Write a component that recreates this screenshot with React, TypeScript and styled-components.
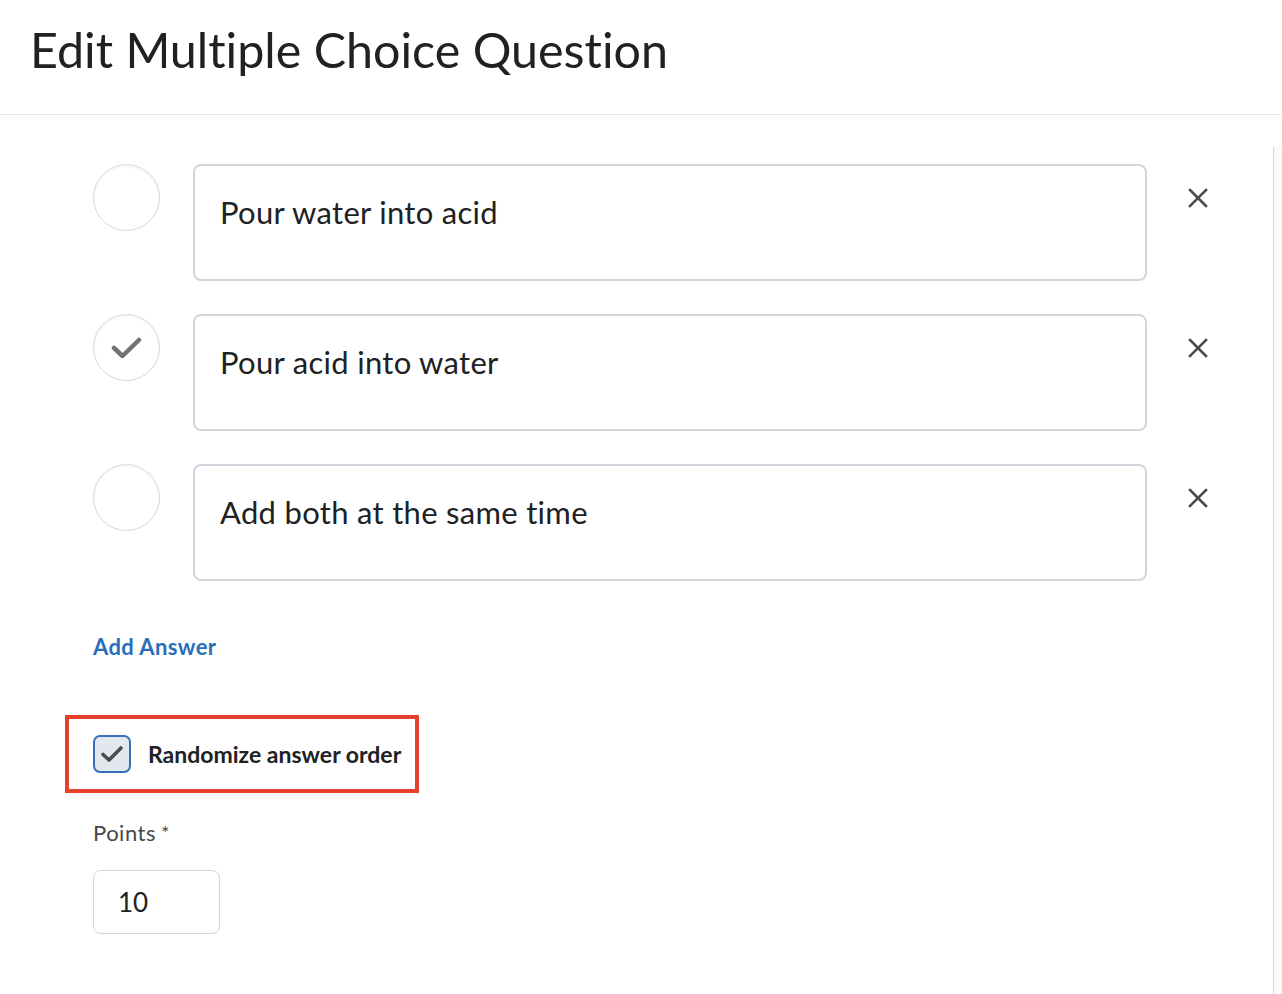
import React from "react";
import styled, { createGlobalStyle } from "styled-components";

const Global = createGlobalStyle`
  html, body { margin: 0; padding: 0; background: #ffffff; }
  body {
    font-family: Lato, "Open Sans", sans-serif;
    color: #202122;
    font-variant-ligatures: no-common-ligatures;
  }
  * { box-sizing: border-box; }
`;

const Page = styled.div`
  width: 1282px;
  height: 994px;
  overflow: hidden;
  display: flex;
  flex-direction: column;
`;

const Header = styled.header`
  height: 115px;
  flex: none;
  border-bottom: 1px solid #e3e9f1;
  padding: 19px 0 0 30px;
`;

const Title = styled.h1`
  margin: 0;
  font-size: 48.4px;
  line-height: 61px;
  font-weight: 400;
  color: #202122;
`;

const Body = styled.div`
  flex: 1;
  display: flex;
`;

const Main = styled.main`
  flex: 1;
  padding: 49px 0 0 93px;
  display: flex;
  flex-direction: column;
  align-items: flex-start;
`;

const ScrollTrack = styled.div`
  width: 9px;
  margin-top: 32px;
  border-left: 1px solid #d6d8da;
  background: #f8fafe;
`;

const AnswerList = styled.div`
  display: flex;
  flex-direction: column;
  gap: 33px;
`;

const AnswerRow = styled.div`
  display: flex;
  align-items: flex-start;
`;

const Radio = styled.div`
  width: 67px;
  height: 67px;
  border-radius: 50%;
  border: 1px solid #d3d9e1;
  box-shadow: inset 0 2px 2px rgba(0, 0, 0, 0.04);
  background: #fff;
  display: flex;
  align-items: center;
  justify-content: center;
  margin-right: 33px;
  flex: none;
`;

const AnswerBox = styled.div`
  width: 954px;
  height: 117px;
  border: 2px solid #cfd6dd;
  border-radius: 8px;
  padding: 28px 0 0 25px;
  font-size: 31px;
  line-height: 36px;
  letter-spacing: 0.3px;
  color: #202122;
`;

const RemoveButton = styled.button`
  border: none;
  background: none;
  padding: 0;
  margin: 24px 0 0 41px;
  width: 20px;
  height: 20px;
  display: flex;
  cursor: pointer;
`;

const AddAnswer = styled.a`
  margin-top: 53px;
  font-size: 22px;
  line-height: 26px;
  font-weight: 700;
  letter-spacing: 0.4px;
  color: #2a6ebb;
  text-decoration: none;
  cursor: pointer;
`;

const Highlight = styled.label`
  margin: 55px 0 0 -28px;
  display: inline-flex;
  align-items: center;
  gap: 17px;
  border: 4px solid #e5412c;
  padding: 16px 14px 16px 24px;
  cursor: pointer;
`;

const CheckBox = styled.span`
  width: 38px;
  height: 38px;
  border: 2px solid #3a70b9;
  border-radius: 7px;
  background: #e3e7ee;
  display: flex;
  align-items: center;
  justify-content: center;
  flex: none;
`;

const CheckLabel = styled.span`
  font-size: 23px;
  line-height: 26px;
  font-weight: 700;
  color: #202122;
`;

const FieldLabel = styled.div`
  margin-top: 27px;
  height: 26px;
  display: flex;
  align-items: flex-start;
  font-size: 22px;
  line-height: 26px;
  letter-spacing: 0.5px;
  color: #45484b;
`;

const Required = styled.span`
  font-size: 20px;
  line-height: 20px;
  margin: 2px 0 0 5px;
  color: #45484b;
`;

const PointsInput = styled.div`
  margin-top: 24px;
  width: 127px;
  height: 64px;
  border: 1px solid #cfd6dd;
  border-radius: 8px;
  padding: 16px 0 0 24px;
  font-size: 26px;
  line-height: 30px;
  color: #202122;
`;

const XIcon = () => (
  <svg width="20" height="20" viewBox="0 0 20 20">
    <path d="M2 2 L18 18 M18 2 L2 18" stroke="#494c4e" strokeWidth="2.6" strokeLinecap="square" />
  </svg>
);

const RadioCheck = () => (
  <svg width="32" height="24" viewBox="0 0 32 24">
    <path d="M3 12 L11.5 20 L28 4" fill="none" stroke="#6e7376" strokeWidth="4.5" strokeLinecap="round" strokeLinejoin="round" />
  </svg>
);

const BoxCheck = () => (
  <svg width="24" height="20" viewBox="0 0 24 20">
    <path d="M3 10.5 L9 16 L21 4" fill="none" stroke="#4a4d50" strokeWidth="3.6" strokeLinecap="round" strokeLinejoin="round" />
  </svg>
);

const answers = [
  { text: "Pour water into acid", correct: false },
  { text: "Pour acid into water", correct: true },
  { text: "Add both at the same time", correct: false },
];

export default function App() {
  return (
    <Page>
      <Global />
      <Header>
        <Title>Edit Multiple Choice Question</Title>
      </Header>
      <Body>
        <Main>
          <AnswerList>
            {answers.map((a) => (
              <AnswerRow key={a.text}>
                <Radio>{a.correct && <RadioCheck />}</Radio>
                <AnswerBox>{a.text}</AnswerBox>
                <RemoveButton aria-label="Remove answer">
                  <XIcon />
                </RemoveButton>
              </AnswerRow>
            ))}
          </AnswerList>
          <AddAnswer>Add Answer</AddAnswer>
          <Highlight>
            <CheckBox>
              <BoxCheck />
            </CheckBox>
            <CheckLabel>Randomize answer order</CheckLabel>
          </Highlight>
          <FieldLabel>
            Points<Required>*</Required>
          </FieldLabel>
          <PointsInput>10</PointsInput>
        </Main>
        <ScrollTrack />
      </Body>
    </Page>
  );
}
